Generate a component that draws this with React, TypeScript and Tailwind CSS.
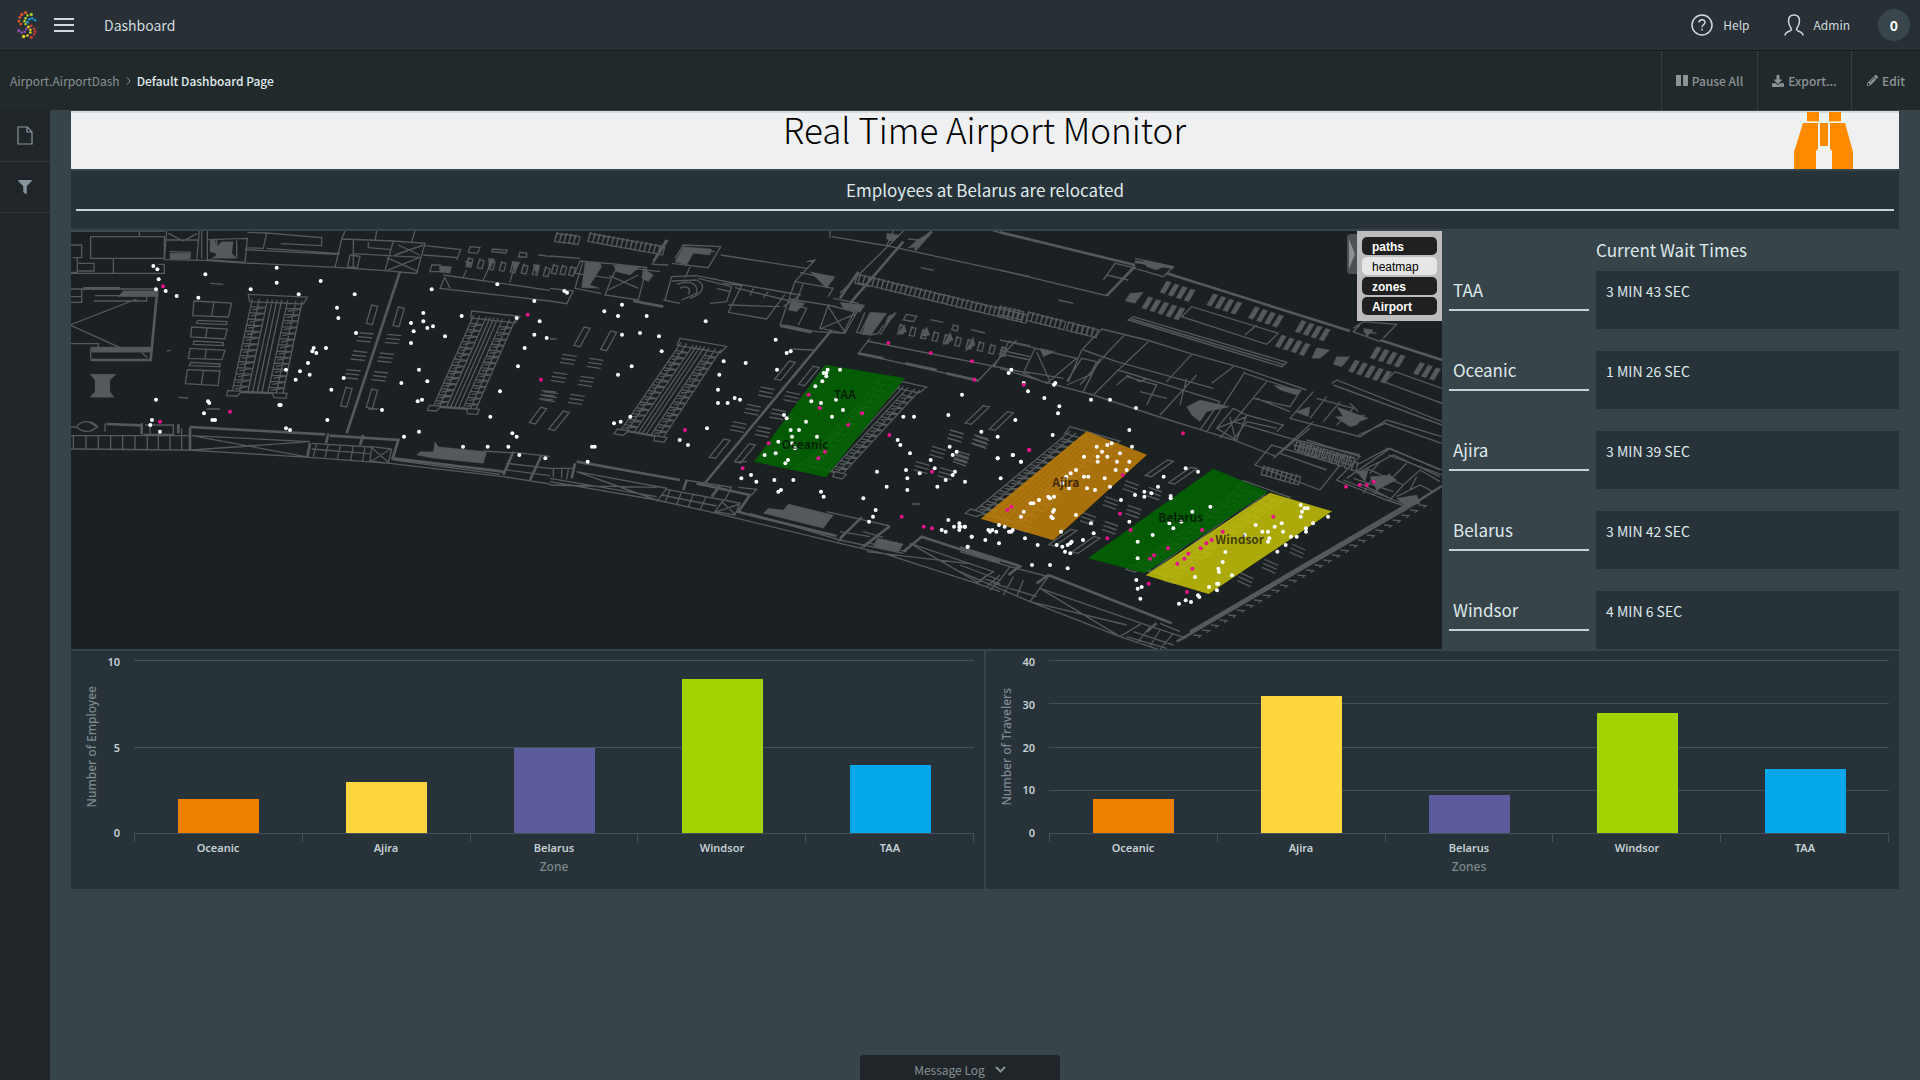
import { FaDownload, FaFilter, FaPencilAlt } from "react-icons/fa";

type Point = [number, number];

interface Zone {
  name: string;
  value: number;
}

interface Sector {
  x: number;
  y: number;
  thin: string;
  thick: string;
  solid: string;
  travelers: string;
  employees: string;
}

const waitTimes = [
  { zone: "TAA", time: "3 MIN 43 SEC" },
  { zone: "Oceanic", time: "1 MIN 26 SEC" },
  { zone: "Ajira", time: "3 MIN 39 SEC" },
  { zone: "Belarus", time: "3 MIN 42 SEC" },
  { zone: "Windsor", time: "4 MIN 6 SEC" },
];

const employees: Zone[] = [
  { name: "Oceanic", value: 2 },
  { name: "Ajira", value: 3 },
  { name: "Belarus", value: 5 },
  { name: "Windsor", value: 9 },
  { name: "TAA", value: 4 },
];

const travelers: Zone[] = [
  { name: "Oceanic", value: 8 },
  { name: "Ajira", value: 32 },
  { name: "Belarus", value: 9 },
  { name: "Windsor", value: 28 },
  { name: "TAA", value: 15 },
];

const barColors = ["bg-[#ee8200]", "bg-[#ffd540]", "bg-[#5c5c9c]", "bg-[#a2d200]", "bg-[#04a8ea]"];

// point inside the quad tl, tr, bl, br
function at(q: Point[], u: number, v: number): string {
  const x = (1 - v) * ((1 - u) * q[0][0] + u * q[1][0]) + v * ((1 - u) * q[2][0] + u * q[3][0]);
  const y = (1 - v) * ((1 - u) * q[0][1] + u * q[1][1]) + v * ((1 - u) * q[2][1] + u * q[3][1]);
  return `${Math.round(x)} ${Math.round(y)}`;
}

// check-in island: two columns of desks with belts between them
function island(q: Point[]): string {
  let d = `M${at(q, 0, 0)}L${at(q, 1, 0)}L${at(q, 0.96, 0.07)}L${at(q, 0.04, 0.07)}Z`;
  d += `M${at(q, 0, 0.95)}L${at(q, 1, 0.95)}L${at(q, 1, 1)}L${at(q, 0.8, 1)}L${at(q, 0.76, 0.96)}L${at(q, 0.22, 0.96)}L${at(q, 0.18, 1)}L${at(q, 0, 1)}Z`;
  for (const u of [0.08, 0.2, 0.34, 0.42, 0.5, 0.58, 0.68, 0.82, 0.93]) {
    d += `M${at(q, u, 0.04)}L${at(q, u, 0.95)}`;
  }
  for (let i = 1; i < 15; i++) {
    const v = 0.06 + i * 0.06;
    d += `M${at(q, 0.08, v)}L${at(q, 0.34, v)}L${at(q, 0.12, v + 0.03)}M${at(q, 0.68, v)}L${at(q, 0.93, v)}L${at(q, 0.72, v + 0.03)}`;
  }
  return d;
}

// groups of three queue lines
function queues(points: Point[], dx: number, dy: number): string {
  return points
    .map(([x, y]) => [0, 1, 2].map((i) => `M${x - i * 4} ${y + i * 12}l${dx} ${dy}`).join(""))
    .join("");
}

function benches(points: Point[], dx: number, dy: number): string {
  return points.map(([x, y]) => `M${x} ${y}l${dx} ${dy}l18 4l${-dx} ${-dy}Z`).join("");
}

// a run of slanted parking bays
function bays(x: number, y: number, count: number, h = 34): string {
  let d = "";
  for (let i = 0; i < count; i++) {
    d += `M${x + i * 24} ${y + i * 8}l14 4l-20 ${h}l-14 -4Z`;
  }
  return d;
}

// seats and small desks along a line
function clutter(x: number, y: number, count: number, step: number, slope: number): string {
  let d = "";
  for (let i = 0; i < count; i++) {
    const px = x + i * step;
    const py = Math.round(y + i * step * slope);
    d += `M${px} ${py}l14 3l-6 24l-14 -3ZM${px + 3} ${py - 4}l-10 30`;
  }
  return d;
}

function teeth(x: number, y: number, count: number): string {
  let d = "";
  for (let i = 0; i < count; i++) {
    d += `M${x + i * 26} ${y - i * 15}l22 2l-8 6`;
  }
  return d;
}

// map sectors, three map units to a pixel
const sectors: Sector[] = [
  {
    x: -3,
    y: -18,
    thin:
      "M0 18H285M62 35H283V100H62ZM0 60H35V98H8M22 98V142H0M25 115H72V138H25M130 98V145M0 145H283V118H265M208 18V35" +
      "M290 18L283 104L400 106L525 114L800 127L945 137L1040 146M295 25L340 48L382 25M290 45H385M388 18L380 105M300 80L360 82V100M395 18V100M412 18V104L525 112L532 40L415 44M440 46V100M500 46V100M532 22L590 24L580 70L528 68" +
      "M590 24L755 38V62L632 56M525 74L800 88M590 70L810 86M825 18L815 42L795 128M850 42V125M815 42L970 48L945 137M850 86L955 92M895 52V68L965 74M840 90L870 94L862 128L832 126Z" +
      "M970 48L1065 55L1040 145L945 137ZM955 92L1052 97M950 98L1045 140M1048 98L950 137M985 60L1050 90M1060 60L975 90M920 18L915 48M1035 18L1025 50M1065 62L1172 74L1160 105M1060 90L1165 98" +
      "M1085 120H1110V140H1080ZM1125 155L1110 190L1440 228M1120 150L1440 196M1125 158L1140 190M1200 65L1230 68L1222 85L1195 82ZM1268 72L1312 76L1308 84L1265 80ZM1350 82L1370 84V96H1345ZM1405 90L1440 94" +
      "M0 192H255M35 190V232H0M0 215H35M75 212H230V228H72M200 222L0 300L150 368M0 356H85V370H62V402M215 382L232 398M420 175L460 178M325 517L355 519M290 377H302M410 552H450M895 552H925" +
      "M372 228L485 234L475 276L368 272ZM432 232L424 275M382 286L470 290V299L380 295ZM365 306L472 312L464 342L362 336ZM412 310L406 340M372 348L460 353V362L370 358ZM360 370L465 376L456 404L355 400ZM410 372L404 402M362 412L450 417V425L358 422ZM352 434L450 438L444 482L346 476ZM400 437L394 480" +
      "M0 606H20M20 604C35 585 65 585 82 604C65 625 35 622 20 606M55 590L82 606L60 618M105 595V620M0 632H360M0 672L350 675L720 697L960 715L1300 755L1440 777M10 630V672M48 630V672M85 630V673M122 630V673M158 630V674M195 630V674M232 630V674M265 632V675M300 632V675M335 610V675" +
      "M365 632L720 697M365 675L720 650M365 632L720 650M225 600H310V628H220M240 602V628M740 655L730 695M775 658L765 697M812 660L802 700M850 662L842 706M885 666L878 708M725 672L900 686M725 655L905 666M905 665L965 672L955 715L900 708ZM905 668L955 712M962 672L905 708M985 640L970 705L1290 748M1330 682L1440 694M1310 715L1440 730M1310 735L1440 752M1240 678L1330 684" +
      benches([[905, 240], [985, 246], [828, 487], [905, 492]], -16, 55) +
      benches([[1412, 547]], -34, 46) +
      queues([[868, 323], [952, 328], [850, 378], [930, 384], [830, 434], [912, 440], [1415, 497]], 42, 4) +
      island([[535, 208], [712, 216], [470, 512], [648, 520]]) +
      island([[1205, 258], [1350, 274], [1072, 556], [1222, 568]]) +
      clutter(1195, 100, 8, 33, 0.12) +
      "M1178 160L1190 135M1240 165L1260 120M1320 172L1335 115",
    thick:
      "M40 190H150M260 215L242 405H62M990 140L830 625M110 597L215 601M360 606L765 628M780 632L985 645L968 700L1300 740M215 595V628M325 598V625M360 608V675M720 655L712 697M775 625L768 655M880 630L870 660M1330 680L1300 750M1415 690L1380 765",
    solid:
      "M160 197H265V215H145ZM65 366H242V382H65ZM60 448H138L120 465V500L132 517H60L75 500V465ZM420 45H435L440 65L455 50H490L485 85L500 100H425L445 88L420 80ZM300 85H360V103H300ZM1110 122L1145 125L1140 145L1110 142ZM1095 650L1105 665L1250 680L1240 715L1090 700L1040 690L1050 680L1090 680ZM1185 108L1208 112L1196 128ZM1255 100L1275 102L1258 135ZM1325 108L1350 112L1335 140ZM1390 118L1410 120L1398 148Z",
    travelers:
      "250,123 262,133 266,163 258,193 287,198 320,213 385,218 406,148 542,193 620,128 620,173 686,208 752,168 801,248 805,279 854,208 858,324 731,369 727,379 739,384 768,369 714,414 648,434 690,439 719,449 677,464 784,494 821,459 628,540 632,540 772,585 648,610 660,615 258,524 246,585 241,600 270,620 402,565 414,529 418,534 427,585 435,585 1085,193 1060,264 1060,289 1023,294 1031,319 1072,309 1089,304 1125,334 1023,354 1175,273 1282,178 1393,228 1340,279 1409,289 1393,329 1430,339 1364,369 1344,424 1047,434 1072,469 994,474 1290,499 1056,524 1043,529 936,555 1261,575 1002,635 1047,620 1327,625 1340,635 1179,665 1253,665 1315,665 1348,690 1426,700",
    employees: "279,184 1373,269 1413,464 480,560 270,590",
  },
  {
    x: 1437,
    y: -18,
    thin:
      "M0 93L90 100M75 145L185 160L205 118L90 108ZM98 112L75 190L155 206M185 160L165 210L265 225L290 128L205 118M178 152L265 190M265 150L175 195M200 125L330 140M0 228L50 236L70 198L0 190M305 120L355 45M355 120L310 118M375 100L400 60L512 65L475 128L365 115M400 72L495 80M420 125L405 160" +
      "M345 225L365 155L440 152L580 180L750 210L700 245M365 168L440 165C470 180 460 205 420 220M380 178C420 165 445 175 440 205L395 225M390 190C410 180 425 190 415 208M340 225L390 235M445 160L545 185L530 230L480 235M500 190L540 200M520 175L575 182L535 262L650 282L705 208M535 240L690 245M555 188L720 228M610 190L600 212M655 200L640 218" +
      "M512 90L770 130M770 110L795 105L735 170L850 190M750 142L850 165M735 170L690 300M760 175L735 240L770 250L745 300M690 300L800 320L880 325L925 235L850 220M720 222L860 245M835 240L920 262L885 325L810 310ZM810 312L920 265M835 245L885 322M870 205L1060 18M705 300L785 318M850 188L835 215" +
      "M845 35L1010 62L1030 18M840 18V40M1010 62L1440 155M1075 70L1145 18M1095 75L1120 40M1105 45L1075 42M1112 128L1152 136M1330 18L1440 42M925 142L915 175L960 185M960 340L925 385L1285 467L1400 345M950 348L1440 445M1070 268L1100 274L1090 290L1060 284ZM1140 284L1180 292M1210 300L1225 304L1222 318L1205 314ZM1262 314L1305 324" +
      "M1380 345L1330 428M1380 350L1440 362M1345 385L1440 405M1360 430L1410 440M20 342H0M790 375L720 372" +
      "M1000 300L985 325L960 330L920 322L945 262M960 265L930 325M975 270L965 320M1035 262L990 330" +
      benches([[102, 306], [182, 318]], -30, 55) +
      benches([[718, 408], [790, 424], [522, 642], [598, 656], [40, 558]], -44, 54) +
      benches([[1300, 542], [1372, 560]], -54, 52) +
      queues([[38, 388], [118, 400], [10, 442], [92, 454], [-18, 500], [62, 508]], 42, 6) +
      queues([[632, 486], [708, 500], [590, 538], [666, 552], [548, 590], [622, 604]], 42, 8) +
      queues([[1200, 615], [1272, 630], [1146, 664], [1218, 678], [1098, 710], [1170, 728]], 42, 12) +
      island([[390, 340], [530, 364], [192, 626], [342, 652]]) +
      island([[990, 455], [1130, 486], [736, 728], [876, 762]]) +
      clutter(20, 25, 5, 14, 0.12) +
      clutter(120, 25, 16, 14, 0.18) +
      clutter(930, 150, 36, 14, 0.24) +
      clutter(1050, 300, 10, 34, 0.22) +
      clutter(10, 120, 3, 26, 0.12),
    thick:
      "M845 315L465 774M1060 50L900 235M250 228L340 245M690 302L785 322M310 110L350 45M870 220L925 140M925 385L1000 400M1065 415L1160 435M1190 445L1285 467M1095 75L1145 20",
    solid:
      "M105 112H150L155 125L120 180L150 190L95 188ZM190 120L270 125L240 150L200 140ZM400 65L485 72L480 90L430 85L410 120L375 110ZM780 140L855 155L830 190ZM960 262L1010 265L985 300L965 328H935ZM1015 272L1040 265L1000 310ZM870 232L945 240L930 262L880 250ZM725 225L765 235L740 260L715 255ZM1010 25L1050 30L1030 50L1010 42ZM1040 330L1062 300L1070 320ZM1110 335L1130 305L1140 330ZM1180 360L1200 322L1210 345ZM1245 380L1270 335L1275 360ZM1100 45L1130 30L1110 65L1080 68ZM280 130L310 150L295 170L275 160Z",
    travelers:
      "43,198 51,203 216,239 163,259 204,273 290,273 216,329 270,324 327,334 467,289 335,379 245,424 204,449 521,409 587,414 508,449 504,494 504,534 533,534 554,519 570,524 241,575 212,590 192,595 471,610 389,645 414,660 126,665 134,665 113,710 677,344 722,379 710,384 681,434 870,434 833,434 821,444 829,444 829,454 817,469 796,484 784,529 813,534 858,524 879,555 846,575 702,570 710,580 768,590 722,615 747,615 726,635 801,635 685,650 726,655 735,670 644,690 677,685 714,705 706,715 1384,434 1376,444 1421,474 1434,499 1236,509 1195,570 1396,585 1294,620 1343,635 1060,575 1092,575 1043,645 1051,660 1080,685 1199,665 1220,680 1208,690 1142,705 1343,700 1388,690 1413,710",
    employees:
      "1015,354 1142,384 1266,409 1273,464 1421,479 776,509 809,549 936,565 895,600 656,655 825,680 805,700 1018,630 405,615 1437,675",
  },
  {
    x: 2787,
    y: -18,
    thin:
      "M0 135L320 212L405 120M310 165L345 115L410 130M320 150L385 165M405 100L520 125L490 155L405 130M175 225L220 235M545 275L575 245L835 325L800 358ZM735 330L770 300M385 285L400 275L860 412L845 425ZM395 282L850 418" +
      "M305 312L440 345L580 388L730 430L920 495M305 312L245 375L205 470M375 328L325 380M450 345L355 435L280 510M575 388L500 470M700 425L635 475M250 375L350 410L640 490M325 380L240 480M355 435L660 530M0 430L130 470L280 510L460 570L620 620L700 645L830 695M70 445L105 370L230 400L140 475ZM75 440L190 460M110 380L150 470M0 345L110 370M0 375L90 395" +
      "M200 470L245 400L290 410L270 450L200 480M300 400L250 500M380 450L420 470L440 460M350 480L380 455L470 480L440 540M420 500L500 520M480 570L590 450M560 460L540 540M660 530L600 615M735 440L620 620M735 445L900 500L870 545L760 520M800 470L660 640M700 550L740 570L710 645L650 610ZM650 610L740 575M690 575L705 640M740 570L850 600L830 620M770 520L870 560M700 645L740 590L830 610M830 690L940 590M870 640L700 590M940 500L870 580L1080 635L1160 585L1325 635M950 520L1060 550L1010 600M980 515L930 580M1020 530L970 590M1075 630L1155 595L1325 655M1050 535L1075 560" +
      "M870 640L1080 690M930 610L820 700M1070 720L1165 670L1326 735M1165 690L1326 750M995 475L1010 465L1326 590M1000 480L1326 600M1155 470L1185 440L1326 490M1150 470L1326 535M1060 310L1090 290L1190 298L1150 340M1080 300L1060 320L1140 350M1090 320L1130 325M880 660L1060 700" +
      clutter(0, 245, 5, 14, 0.22) +
      clutter(85, 262, 8, 14, 0.25) +
      clutter(205, 292, 6, 15, 0.25) +
      clutter(890, 650, 9, 20, 0.28),
    thick: "M0 22L405 120M500 145L1050 318M1140 345L1326 405M320 212L405 125M405 110L520 128",
    solid:
      bays(500, 168, 4) +
      bays(640, 206, 4) +
      bays(765, 245, 4) +
      bays(905, 286, 4) +
      bays(445, 215, 5) +
      bays(845, 330, 4) +
      bays(1130, 365, 4) +
      bays(1065, 405, 5) +
      bays(1260, 412, 3) +
      "M390 205L430 202L405 235L375 228ZM935 400L950 368L990 375L960 400ZM1010 395L1050 395L1025 425L1000 418ZM430 105L500 120L470 135L440 125ZM560 545L600 525L690 545L620 560L600 590L575 570ZM1010 545L1105 580L1050 600L1030 575ZM885 560L930 545L925 575ZM120 370L165 380L130 395ZM1090 310L1120 315L1100 335ZM820 480L905 495L890 510L840 495Z",
    travelers: "133,519 166,474 162,479 178,544 273,524 330,524 408,549",
    employees: "",
  },
  {
    x: 1437,
    y: 507,
    thin:
      "M0 245L320 300L500 340L870 430L1000 460L1280 550L1350 575M0 235L320 290M80 215L320 300M0 255L320 262M80 215L350 265L320 305M360 270L345 308M395 275L380 314M430 282L415 322M468 290L450 330M335 285L500 318M350 268L520 300M0 205H70M10 205V232M35 208V235M55 208L50 238M520 300L570 310L555 345L495 335ZM515 305L555 342M570 312L500 335" +
      "M405 240L545 262L525 300M565 262L620 268L605 285M565 185H590M600 340L870 420L1060 460M830 335L1020 378M870 395L960 410M935 350L865 425M1020 380L930 445M940 395L1000 412M960 430L1070 455M985 412L970 440M1010 418L995 446M1040 425L1020 452M1080 430L1280 545M950 455L1250 490M1080 430L1330 515L1280 548M1350 525L1310 560M1300 535L1350 552M1085 312H1110",
    thick:
      "M80 185L390 240M75 190L65 235M410 240L400 270M440 250L600 285L565 335L600 345L860 408M510 258L485 290M935 352L870 415M1020 378L940 440M1060 455L1115 410L1350 487",
    solid:
      "M715 312L850 345L820 385L700 355L640 340L655 325L700 330ZM985 415L1060 432L1045 455L975 440Z",
    travelers:
      "603,225 574,235 619,245 673,240 730,240 685,275 693,270 813,275 821,290 981,215 1010,260 940,295 977,330 969,350 957,365 1068,210 1072,235 1109,220 1154,205 1215,215 1208,225 1187,240 1245,245 1162,260 1072,270 1195,360 1175,390 1187,395 1212,380 1228,370 1228,380 1228,390 1245,380 1265,410 1253,440",
    employees: "578,205 1146,215 1055,350 1121,380 1146,385",
  },
  {
    x: 2667,
    y: 537,
    thin:
      "M0 485L210 575L480 680L600 720M0 425L150 470L120 510L0 465M80 495L50 522M120 510L90 540M150 470L265 500L210 575M160 500L130 555M190 510L170 560M100 520L230 560M240 535L545 640L480 680M240 535L480 680M210 575L500 645M545 640L680 685M570 650L530 700M600 660L570 708M640 670L600 718M520 665L640 705M500 680L620 715M600 640L660 665" +
      "M885 165L935 105L1140 165L1080 240ZM960 130L1100 180M1040 90L1200 140L1130 210L1280 270L1340 290M1160 205L1290 115L1440 180M1190 190L1300 135L1440 200M1200 220L1290 265M1180 205L1300 245M1220 175L1330 225L1290 270M1210 250L1240 200M1240 255L1290 190M1330 225L1380 180L1440 215M1310 260L1380 225L1420 245M1370 200L1350 240M1260 155L1230 190M1340 160L1290 210M1150 210L1340 285" +
      benches([[622, 150], [692, 172], [332, 358], [402, 380]], -66, 46) +
      queues([[496, 212], [566, 232], [436, 260], [504, 286], [368, 308], [434, 334], [48, 78], [-14, 130]], 40, 14) +
      queues([[996, 402], [914, 448], [840, 488]], 40, 18) +
      island([[330, 50], [480, 94], [16, 310], [200, 366]]) +
      island([[850, 212], [990, 262], [498, 478], [640, 520]]) +
      teeth(700, 675, 27) +
      clutter(910, 170, 8, 14, 0.28) +
      clutter(1020, 100, 9, 20, 0.35),
    thick: "M0 412L185 470M265 495L635 640M180 468L145 495M265 495L230 520M650 695L1340 295L1445 228M690 665L1340 285M590 640L560 665",
    solid:
      "M1230 200L1290 195L1310 210L1250 240ZM1310 265L1370 255L1380 280L1340 290ZM1190 185L1225 180L1215 215ZM1125 20L1215 15L1190 45L1170 50Z",
    travelers:
      "294,10 278,75 159,135 113,145 183,155 122,205 508,60 516,110 410,110 442,105 455,100 426,125 480,130 372,140 413,140 442,140 413,155 471,155 508,155 348,180 332,190 319,200 467,180 500,180 372,200 385,200 434,205 307,220 327,235 381,235 405,240 450,230 265,260 270,265 282,260 237,270 212,280 220,280 191,305 183,320 282,300 279,305 274,320 278,325 348,315 303,365 393,340 401,370 369,390 335,395 331,400 323,405 307,410 290,405 315,425 331,430 195,385 233,405 117,400 76,390 35,380 23,410 14,350 2,350 85,360 97,360 90,365 109,365 117,345 134,350 147,365 154,365 158,360 216,465 270,465 323,475 483,270 525,255 553,245 553,260 574,250 594,230 611,200 677,175 714,185 632,258 632,265 508,335 697,305 751,290 664,335 628,340 640,355 578,375 533,395 533,445 529,510 545,531 533,536 541,566 657,581 677,571 693,576 714,556 718,561 747,531 771,541 771,521 775,521 705,501 816,496 775,476 777,486 788,456 796,426 854,375 887,345 907,365 924,365 928,385 924,395 944,350 965,340 969,365 993,380 1010,380 977,405 952,425 1038,355 1038,365 1059,340 1022,320 1104,320 1026,305 1022,285 1034,295 1043,295",
    employees:
      "669,70 208,120 488,195 142,300 154,290 480,311 512,360 442,385 726,360 788,365 755,390 739,400 722,415 685,431 673,446 652,461 697,476 624,415 582,436 570,446 566,521 681,546 940,320 1158,230 1199,225 1220,225 1241,215",
  },
];

const zoneShapes = [
  { points: "2262,401 2502,441 2265,739 2049,692", color: "#006400" },
  { points: "3047,601 3228,671 2947,928 2729,863", color: "#bd7c08" },
  { points: "3427,713 3592,782 3222,1027 3051,982", color: "#006400" },
  { points: "3597,785 3783,841 3413,1089 3224,1033", color: "#c0bd08" },
];

const zoneLabels = [
  { name: "TAA", x: 2288, y: 504 },
  { name: "Oceanic", x: 2132, y: 654 },
  { name: "Ajira", x: 2944, y: 769 },
  { name: "Belarus", x: 3262, y: 872 },
  { name: "Windsor", x: 3433, y: 939 },
];

function Dots({ points, color }: { points: string; color: string }) {
  return (
    <g fill={color}>
      {points.split(" ").filter(Boolean).map((p, i) => {
        const [cx, cy] = p.split(",");
        return <circle key={i} cx={cx} cy={cy} r="6" />;
      })}
    </g>
  );
}

function AirportMap() {
  return (
    <svg viewBox="0 0 4113 1254" preserveAspectRatio="xMinYMin slice" className="block w-full h-full bg-[#1b2022]">
      {sectors.map((s, i) => (
        <g key={i} transform={`translate(${s.x} ${s.y})`} fill="none" stroke="#54595c">
          <path d={s.thin} strokeWidth="4" />
          <path d={s.thick} strokeWidth="8" />
          <path d={s.solid} strokeWidth="1" fill="#54595c" />
        </g>
      ))}
      {zoneShapes.map((z, i) => (
        <polygon key={i} points={z.points} fill={z.color} fillOpacity="0.88" />
      ))}
      {sectors.map((s, i) => (
        <g key={i} transform={`translate(${s.x} ${s.y})`}>
          <Dots points={s.travelers} color="#ffffff" />
          <Dots points={s.employees} color="#e8128a" />
        </g>
      ))}
      {zoneLabels.map((l) => (
        <text key={l.name} x={l.x} y={l.y} fontSize="36" fontWeight="700" fill="#000000" fillOpacity="0.65">
          {l.name}
        </text>
      ))}
    </svg>
  );
}

function MapLayers() {
  const layers = ["paths", "heatmap", "zones", "Airport"];
  return (
    <div className="absolute top-0 right-0 flex items-start">
      <button aria-label="Collapse layers" className="mt-[3px] w-[10px] h-10 rounded-l-sm bg-[#4d5153] flex items-center justify-center">
        <svg width="6" height="30" viewBox="0 0 6 30">
          <path d="M0 0L6 15L0 30Z" fill="#8d9193" />
        </svg>
      </button>
      <div className="w-[85px] h-[90px] px-[5px] py-[6px] bg-[#bcbcbe] flex flex-col gap-[2px] font-['Liberation_Sans',Arial,sans-serif]">
        {layers.map((layer) => (
          <button
            key={layer}
            className={
              layer === "heatmap"
                ? "h-[18px] pl-[10px] rounded-[5px] text-left text-[12px] leading-5 bg-[#e6e6e6] text-black"
                : "h-[18px] pl-[10px] rounded-[5px] text-left text-[12px] leading-5 bg-[#202020] text-white font-bold"
            }>
            {layer}
          </button>
        ))}
      </div>
    </div>
  );
}

interface ChartProps {
  data: Zone[];
  max: number;
  step: number;
  yTitle: string;
  xTitle: string;
}

function BarChart({ data, max, step, yTitle, xTitle }: ChartProps) {
  const ticks: number[] = [];
  for (let t = max; t >= 0; t -= step) ticks.push(t);
  return (
    <section className="flex-1 h-[238px] pt-[9px] pr-[10px] bg-[#273338] flex font-['Noto_Sans',sans-serif] text-[11px] leading-4">
      <div className="w-[30px] h-[173px] pl-3 flex items-center justify-center">
        <span className="[writing-mode:vertical-rl] rotate-180 text-[12px] leading-4 font-medium text-[#7d8a90] whitespace-nowrap">{yTitle}</span>
      </div>
      <div className="w-[33px] h-[173px] pr-[14px] flex flex-col justify-between text-right font-semibold text-[#c5d0d4]">
        {ticks.map((t) => (
          <div key={t} className="h-0 flex items-center justify-end pt-[2px]">{t}</div>
        ))}
      </div>
      <div className="flex-1">
        <div className="relative h-[174px]">
          <div className="absolute inset-0 flex flex-col justify-between">
            {ticks.map((t) => (
              <div key={t} className="h-px bg-[#43525a]" />
            ))}
          </div>
          <div className="relative h-[173px] pt-[2px] flex items-end">
            {data.map((d, i) => (
              <div key={d.name} className="flex-1 h-full flex items-end justify-center">
                <div className={`w-[81px] ${barColors[i]}`} style={{ height: `${(d.value / max) * 100}%` }} />
              </div>
            ))}
          </div>
        </div>
        <div className="flex border-r border-[#43525a] h-2">
          {data.map((d) => (
            <div key={d.name} className="flex-1 border-l border-[#43525a]" />
          ))}
        </div>
        <div className="flex text-center font-semibold text-[#c5d0d4]">
          {data.map((d) => (
            <div key={d.name} className="flex-1 -mt-[2px]">{d.name}</div>
          ))}
        </div>
        <div className="pt-[3px] text-center text-[12px] leading-4 font-medium text-[#7d8a90]">{xTitle}</div>
      </div>
    </section>
  );
}

function Logo() {
  const dots: [number, number, number, string][] = [
    [8, 2, 2, "#d8552a"], [4, 4, 2, "#d8552a"], [2, 7, 1, "#d8552a"], [1, 11, 1, "#d8552a"], [3, 14, 1, "#d8552a"],
    [14, 4, 2, "#a5c82a"], [10, 5, 1, "#a5c82a"], [8, 8, 1, "#a5c82a"], [7, 11, 1, "#a5c82a"], [8, 14, 1, "#a5c82a"],
    [18, 10, 1, "#1596cf"], [15, 8, 1, "#1596cf"], [12, 9, 1, "#1596cf"], [10, 12, 1, "#1596cf"],
    [1, 21, 2, "#8a4aa8"], [4, 23, 1, "#8a4aa8"], [7, 22, 1, "#8a4aa8"], [9, 19, 1, "#8a4aa8"],
    [6, 27, 2, "#e3cf25"], [10, 26, 1, "#e3cf25"], [13, 23, 1, "#e3cf25"], [13, 20, 1, "#e3cf25"], [11, 17, 1, "#e3cf25"],
    [14, 28, 2, "#cc3b33"], [17, 25, 1, "#cc3b33"], [18, 22, 1, "#cc3b33"], [17, 19, 1, "#cc3b33"], [14, 16, 1, "#cc3b33"],
  ];
  return (
    <svg width="20" height="30" viewBox="-1 0 21 30">
      {dots.map(([x, y, r, c], i) => (
        <circle key={i} cx={x} cy={y} r={r === 2 ? 1.8 : 1.4} fill={c} />
      ))}
    </svg>
  );
}

function Binoculars() {
  return (
    <svg width="60" height="58" viewBox="0 0 60 58" fill="#ff8a00">
      <path d="M13 1h12v9H13zM35 1h12v9H35zM9 12h15v26l-2 2v18H0V41zM26 12h8v23h-8zM36 12h15l8 29v17H38V40l-2-2z" />
      <path d="M13 10.500h12M35 10.500h12" stroke="#ffd98f" strokeWidth="1" />
    </svg>
  );
}

export default function App() {
  return (
    <div className="min-h-screen flex flex-col bg-[#374449] text-[#dfe9ec] font-['Noto_Sans_CJK_SC',sans-serif]">
      <header className="h-[51px] flex items-center bg-[#283036] border-b border-[#14191b]">
        <a href="#home" aria-label="Home" className="ml-[17px]">
          <Logo />
        </a>
        <button aria-label="Menu" className="ml-[17px] flex flex-col gap-1">
          <span className="block w-5 h-[2px] bg-[#d0dade]" />
          <span className="block w-5 h-[2px] bg-[#d0dade]" />
          <span className="block w-5 h-[2px] bg-[#d0dade]" />
        </button>
        <h1 className="ml-[30px] text-[14px] leading-5 text-[#d0dade]">Dashboard</h1>
        <nav className="ml-auto pr-[10px] flex items-center text-[12px] leading-5 text-[#d0dade]">
          <a href="#help" className="flex items-center gap-[10px]">
            <svg width="22" height="22" viewBox="0 0 22 22" fill="none" stroke="currentColor" strokeWidth="1.500">
              <circle cx="11" cy="11" r="10" />
              <path d="M8 8.500C8 4.800 14 4.800 14 8.300C14 10.800 11 10.700 11 13.300M11 14.800V16.400" />
            </svg>
            Help
          </a>
          <a href="#admin" className="ml-[34px] flex items-center gap-[10px]">
            <svg width="20" height="22" viewBox="0 0 20 22" fill="none" stroke="currentColor" strokeWidth="1.500">
              <path d="M1 21.500C1 17 7.500 17.500 7.500 15.500C7.500 14 4.500 12 4.500 7C4.500 3 6.500 1 10 1S15.500 3 15.500 7C15.500 12 12.500 14 12.500 15.500C12.500 17.500 19 17 19 21.500" />
            </svg>
            Admin
          </a>
          <span className="ml-[28px] size-8 rounded-full bg-[#39464c] flex items-center justify-center text-[14px] font-bold text-white">0</span>
        </nav>
      </header>

      <div className="h-[59px] flex items-center bg-[#22292b] text-[12px] leading-5">
        <nav className="pl-[10px] flex items-center">
          <a href="#airport" className="text-[#879195]">Airport.AirportDash</a>
          <svg width="5" height="8" viewBox="0 0 5 8" className="mx-[6px]" fill="none" stroke="#879195">
            <path d="M1 0.500L4 4L1 7.500" />
          </svg>
          <span className="font-medium text-[#dfe9ec]">Default Dashboard Page</span>
        </nav>
        <div className="ml-auto h-full flex text-[#8b9498] font-medium">
          <button className="w-24 border-l border-[#353d40] flex items-center justify-center gap-[4px]">
            <svg width="12" height="11" viewBox="0 0 12 11" fill="currentColor">
              <path d="M0 0h5v11H0zM7 0h5v11H7z" />
            </svg>
            Pause All
          </button>
          <button className="w-[94px] border-l border-[#353d40] flex items-center justify-center gap-[4px]">
            <FaDownload size={12} />
            Export...
          </button>
          <button className="w-[69px] border-l border-[#353d40] flex items-center justify-center gap-[4px]">
            <FaPencilAlt size={11} />
            Edit
          </button>
        </div>
      </div>

      <div className="flex-1 flex">
        <aside className="w-[50px] bg-[#1f2528] text-[#87969c]">
          <button aria-label="Pages" className="w-full h-[52px] border-b border-[#2e373b] flex items-center justify-center">
            <svg width="16" height="19" viewBox="0 0 16 19" fill="none" stroke="currentColor" strokeWidth="1.200">
              <path d="M1 1H10.500L15 6V18H1ZM10 1V6H15" />
            </svg>
          </button>
          <button aria-label="Filter" className="w-full h-[51px] border-b border-[#2e373b] flex items-center justify-center">
            <FaFilter size={14} />
          </button>
        </aside>

        <main className="flex-1 pl-[21px] pr-[21px] pt-px flex flex-col gap-[2px]">
          <section className="h-[58px] flex items-start bg-[#eff0f2] border-t-2 border-[#d9dcde] text-black">
            <h2 className="flex-1 pl-[104px] text-center text-[35px] leading-8 font-light">Real Time Airport Monitor</h2>
            <div className="w-[105px] h-[56px] flex items-end">
              <Binoculars />
            </div>
          </section>

          <section className="h-[58px] px-[5px] bg-[#273338]">
            <p className="h-10 border-b-2 border-[#c5d2d8] text-center text-[17px] leading-[38px]">Employees at Belarus are relocated</p>
          </section>

          <div className="flex">
            <section className="relative flex-1 h-[418px]">
              <AirportMap />
              <MapLayers />
            </section>
            <section className="w-[457px] pl-[7px]">
              <h3 className="pl-[147px] h-10 text-[17px] leading-[38px]">Current Wait Times</h3>
              <dl className="flex flex-col gap-[22px]">
                {waitTimes.map((w) => (
                  <div key={w.zone} className="flex gap-[7px]">
                    <dt className="w-[140px] h-10 pl-1 border-b-2 border-[#c5d2d8] text-[17px] leading-[38px]">{w.zone}</dt>
                    <dd className="flex-1 h-[58px] pl-[10px] bg-[#273338] text-[14px] leading-[40px]">{w.time}</dd>
                  </div>
                ))}
              </dl>
            </section>
          </div>

          <div className="flex gap-[2px]">
            <BarChart data={employees} max={10} step={5} yTitle="Number of Employee" xTitle="Zone" />
            <BarChart data={travelers} max={40} step={10} yTitle="Number of Travelers" xTitle="Zones" />
          </div>
        </main>
      </div>

      <button className="fixed bottom-0 left-1/2 -translate-x-1/2 w-[200px] h-[25px] rounded-t-[4px] bg-[#1f2528] text-[#879195] text-[12px] leading-5 pt-1 flex items-center justify-center gap-[10px]">
        Message Log
        <svg width="11" height="7" viewBox="0 0 11 7" fill="none" stroke="currentColor" strokeWidth="2">
          <path d="M1 1L5.500 5.500L10 1" />
        </svg>
      </button>
    </div>
  );
}
